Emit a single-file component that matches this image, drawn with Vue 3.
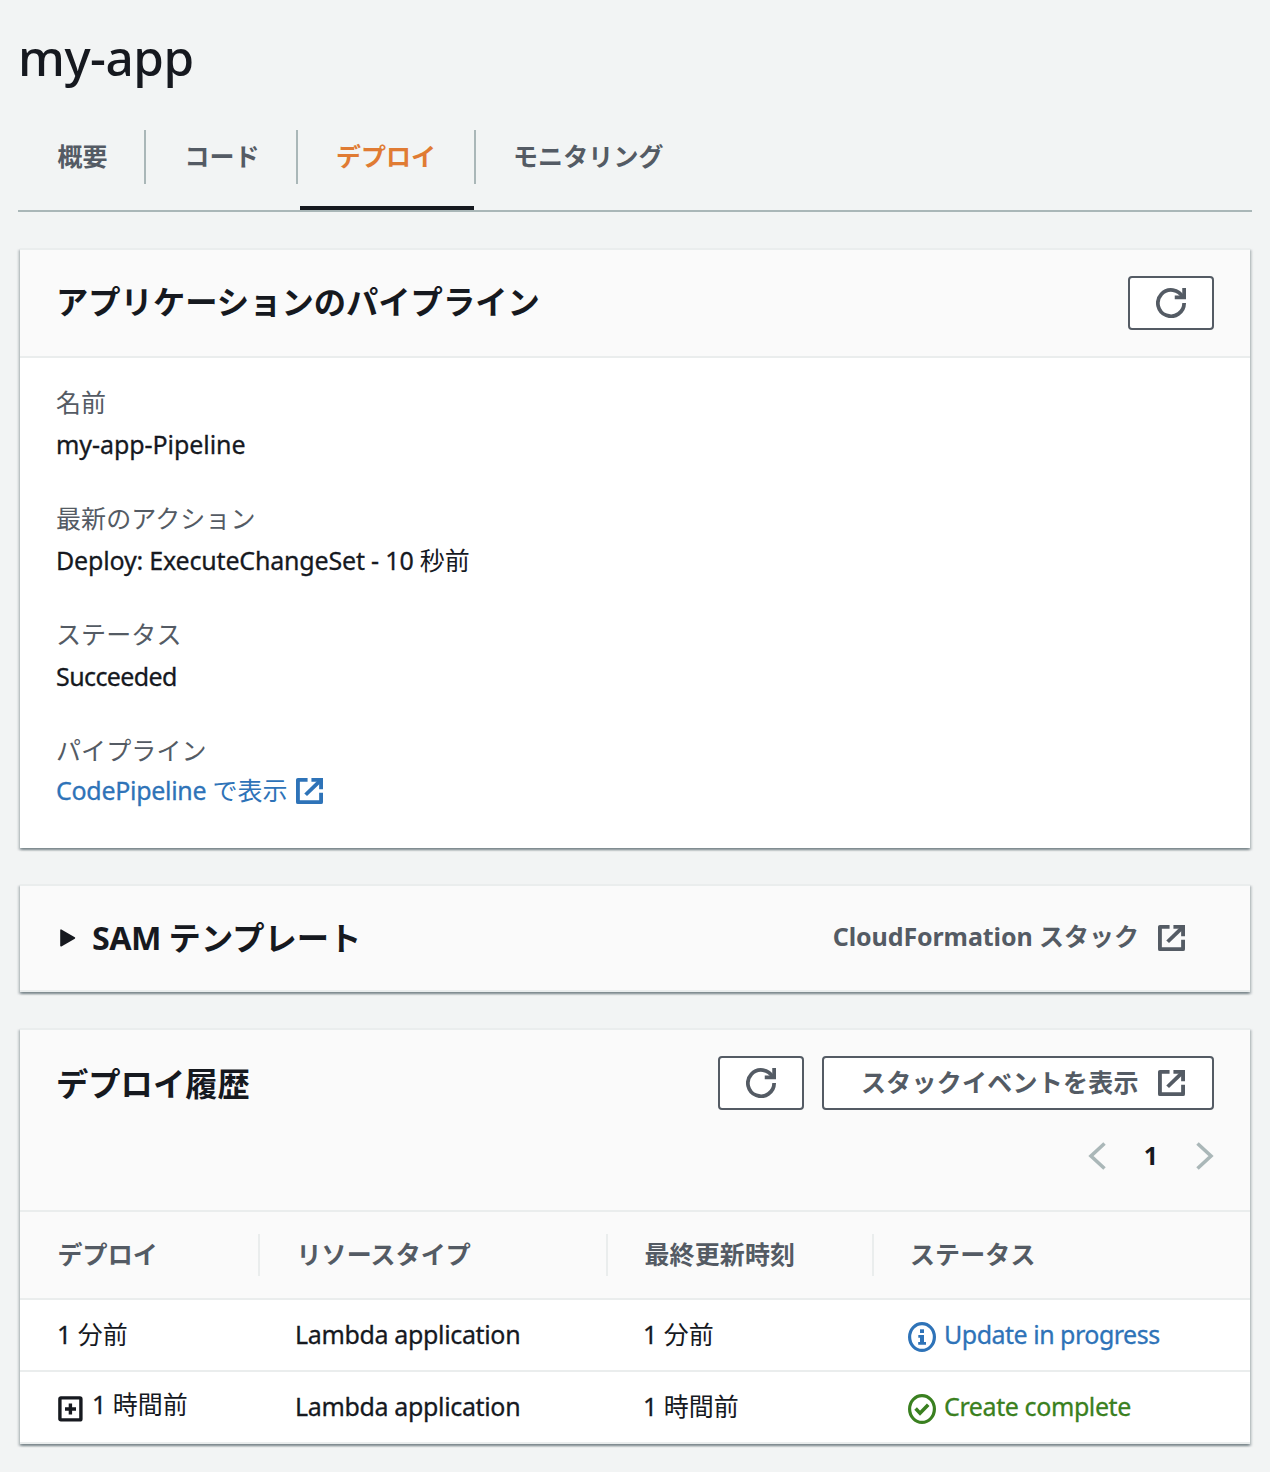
<script setup>
import { h } from 'vue'

const tabs = [
  { label: '概要', width: 128, pad: 39.5 },
  { label: 'コード', width: 152, pad: 38.5 },
  { label: 'デプロイ', width: 178, pad: 38, active: true },
  { label: 'モニタリング', width: 230, pad: 37 },
]

const details = [
  { label: '名前', latin: 'my-app-Pipeline', spacing: -0.07 },
  { label: '最新のアクション', latin: 'Deploy: ExecuteChangeSet - 10 ', rest: '秒前', spacing: -0.18 },
  { label: 'ステータス', latin: 'Succeeded', spacing: -0.6 },
]

const columns = ['デプロイ', 'リソースタイプ', '最終更新時刻', 'ステータス']

const rows = [
  { unit: '分前', type: 'Lambda application', status: 'Update in progress', kind: 'info', spacing: -0.5 },
  { unit: '時間前', type: 'Lambda application', status: 'Create complete', kind: 'success', spacing: -0.4, expandable: true },
]

const stroke = { fill: 'none', stroke: 'currentColor', 'stroke-width': 2 }

const RefreshIcon = () =>
  h('svg', { width: 30, height: 30, viewBox: '0 0 16 16', ...stroke }, [
    h('path', { d: 'M10 5h5V0' }),
    h('path', { d: 'M15 8a7 7 0 1 1-.7-3' }),
  ])

const ExternalIcon = () =>
  h('svg', { width: 27, height: 26, viewBox: '1 1 14 14', preserveAspectRatio: 'none', ...stroke }, [
    h('path', { d: 'M9 2h5v5' }),
    h('path', { d: 'M6 10 14 2' }),
    h('path', { d: 'M14 9v5H2V2h5', 'stroke-linejoin': 'round' }),
  ])
</script>

<template>
  <main class="page">
    <h1 class="title">my-app</h1>

    <nav class="tabs">
      <a
        v-for="tab in tabs"
        :key="tab.label"
        class="tab"
        :class="{ active: tab.active }"
        :style="{ width: tab.width + 'px' }"
      ><span class="tab-label" :style="{ paddingLeft: tab.pad + 'px' }">{{ tab.label }}</span></a>
    </nav>

    <section class="card pipeline">
      <header class="card-header">
        <h2>アプリケーションのパイプライン</h2>
        <button class="btn icon-btn"><RefreshIcon /></button>
      </header>
      <dl class="details">
        <div v-for="d in details" :key="d.label" class="detail">
          <dt>{{ d.label }}</dt>
          <dd><span class="latin" :style="{ letterSpacing: d.spacing + 'px' }">{{ d.latin }}</span>{{ d.rest }}</dd>
        </div>
        <div class="detail">
          <dt>パイプライン</dt>
          <dd class="link-row"><a class="link"><span class="latin">CodePipeline </span>で表示</a><ExternalIcon class="link-icon" /></dd>
        </div>
      </dl>
    </section>

    <section class="card template">
      <header class="card-header">
        <svg class="caret" width="16" height="18" viewBox="0 0 16 18">
          <path d="M1 1.2v15.6L14.4 9z" fill="currentColor" stroke="currentColor" stroke-width="1.6" stroke-linejoin="round" />
        </svg>
        <h2><span class="sam">SAM </span>テンプレート</h2>
        <a class="stack-link"><span class="stack-text"><span class="cf">CloudFormation </span>スタック</span><ExternalIcon /></a>
      </header>
    </section>

    <section class="card history">
      <header class="history-header">
        <div class="history-top">
          <h2>デプロイ履歴</h2>
          <button class="btn icon-btn"><RefreshIcon /></button>
          <button class="btn events-btn"><span class="events-text">スタックイベントを表示</span><ExternalIcon /></button>
        </div>
        <div class="pager">
          <svg width="18" height="28" viewBox="0 0 18 28"><path d="M16.500 1.500 3 14l13.500 12.500" /></svg>
          <span class="page-number">1</span>
          <svg width="18" height="28" viewBox="0 0 18 28"><path d="M1.500 1.500 15 14 1.500 26.500" /></svg>
        </div>
      </header>

      <div class="grid head">
        <div v-for="c in columns" :key="c" class="th">{{ c }}</div>
      </div>
      <div v-for="r in rows" :key="r.status" class="grid row">
        <div class="td first" :class="{ expandable: r.expandable }">
          <svg v-if="r.expandable" class="plus" width="25" height="26" viewBox="0 0 25 26">
            <rect x="1.900" y="1.900" width="21" height="22" rx="1" fill="none" stroke="currentColor" stroke-width="3.400" />
            <path d="M12.400 7.500v11M7 13h11" stroke="currentColor" stroke-width="3.400" />
          </svg>
          <span class="cell-text"><span class="latin">1 </span>{{ r.unit }}</span>
        </div>
        <div class="td"><span class="cell-text latin type">{{ r.type }}</span></div>
        <div class="td"><span class="cell-text"><span class="latin">1 </span>{{ r.unit }}</span></div>
        <div class="td" :class="r.kind">
          <svg class="status-icon" width="28" height="30" viewBox="0 0 28 30" fill="none">
            <ellipse cx="14" cy="15" rx="12.400" ry="13.400" stroke="currentColor" stroke-width="3.200" />
            <g v-if="r.kind === 'info'" fill="currentColor">
              <path d="M12 7.300h4v3.700h-4z" />
              <path d="M10.300 13h5.700v7h2v2.800h-7.800V20H12v-4.300h-1.700z" />
            </g>
            <path v-else d="m7.600 14.600 4.400 4.600 8.200-8.400" stroke="currentColor" stroke-width="3.600" />
          </svg>
          <span class="cell-text latin" :style="{ letterSpacing: r.spacing + 'px' }">{{ r.status }}</span>
        </div>
      </div>
    </section>
  </main>
</template>

<style>
body {
  margin: 0;
  background: #f2f4f4;
}
</style>

<style scoped>
.page {
  box-sizing: border-box;
  width: 1270px;
  height: 1472px;
  padding: 28px 18px 0;
  background: #f2f4f4;
  color: #16191f;
  font-family: "Noto Sans", "Noto Sans CJK JP", sans-serif;
  font-size: 25px;
  line-height: 36px;
  overflow: hidden;
}
svg {
  display: block;
  flex: none;
}
h1, h2, dl, dd {
  margin: 0;
}
.latin {
  white-space: pre;
  -webkit-text-stroke: 0.3px currentColor;
}
.title {
  height: 102px;
  font-size: 49.500px;
  font-weight: 500;
  line-height: 58px;
  letter-spacing: -0.5px;
}
.tabs {
  display: flex;
  height: 80px;
  border-bottom: 2px solid #aab7b8;
  color: #545b64;
  font-weight: 700;
}
.tab {
  box-sizing: border-box;
  height: 80px;
  display: flex;
  flex-direction: column;
}
.tab-label {
  box-sizing: border-box;
  height: 54px;
  line-height: 53px;
  border-right: 2px solid #aab7b8;
  white-space: nowrap;
}
.tab:last-child .tab-label {
  border-right: none;
}
.tab:last-child {
  letter-spacing: 0.1px;
}
.tab.active {
  color: #e07b33;
}
.tab.active::after {
  content: "";
  height: 4px;
  margin: 22px 2px 0;
  background: #16191f;
}
.card {
  margin: 36px 2px 0;
  border-top: 2px solid #eaeded;
  background: #fff;
  box-shadow: 0 2px 2px rgba(0, 28, 36, 0.3), 2px 2px 2px rgba(0, 28, 36, 0.15),
    -2px 2px 2px rgba(0, 28, 36, 0.15);
}
.pipeline {
  height: 598px;
}
.template {
  height: 106px;
}
.history {
  height: 414px;
}
.card-header {
  box-sizing: border-box;
  display: flex;
  align-items: center;
  height: 108px;
  padding: 0 36px;
  background: #fafafa;
  border-bottom: 2px solid #eaeded;
}
.template .card-header {
  height: 106px;
}
h2 {
  font-size: 32.300px;
  font-weight: 700;
  line-height: 44px;
  white-space: nowrap;
}
.pipeline h2 {
  margin-bottom: 4px;
}
.template h2 {
  margin-bottom: 3px;
}
.sam {
  letter-spacing: -0.6px;
}
.cf {
  letter-spacing: -0.1px;
}
.btn {
  box-sizing: border-box;
  display: flex;
  align-items: center;
  justify-content: center;
  height: 54px;
  padding: 0;
  border: 2px solid #545b64;
  border-radius: 4px;
  background: #fff;
  color: #545b64;
  font: inherit;
  font-weight: 700;
}
.icon-btn {
  width: 86px;
  margin-left: auto;
}
.details {
  padding: 26px 36px 0;
}
.detail {
  height: 116px;
}
dt {
  height: 42px;
  color: #545b64;
  letter-spacing: 0.1px;
}
.link-row {
  display: flex;
  align-items: center;
  margin-top: -2px;
}
.link {
  color: #2e73b8;
}
.link .latin {
  letter-spacing: -0.3px;
}
.link-icon {
  margin: 2px 0 0 8px;
  color: #2e73b8;
}
.caret {
  margin: 0 16px 0 4px;
}
.stack-link {
  display: flex;
  align-items: center;
  margin-left: auto;
  margin-right: 29px;
  color: #545b64;
  font-weight: 700;
}
.stack-text,
.events-text {
  margin-right: 19px;
  margin-bottom: 4px;
  white-space: nowrap;
}
.events-text {
  margin-bottom: 2px;
  letter-spacing: 0.25px;
}
.history-header {
  box-sizing: border-box;
  height: 182px;
  padding: 26px 36px 0;
  background: #fafafa;
  border-bottom: 2px solid #eaeded;
}
.history-top {
  display: flex;
  align-items: center;
}
.events-btn {
  width: 392px;
  margin-left: 18px;
  padding-left: 10px;
}
.pager {
  display: flex;
  align-items: center;
  justify-content: flex-end;
  height: 36px;
  margin-top: 28px;
}
.pager path {
  fill: none;
  stroke: #aab7b8;
  stroke-width: 3.600px;
}
.page-number {
  width: 90px;
  margin-bottom: 2px;
  text-align: center;
  font-weight: 700;
}
.grid {
  box-sizing: border-box;
  display: grid;
  grid-template-columns: 240px 348px 266px 1fr;
}
.head {
  height: 88px;
  padding-top: 22px;
  background: #fafafa;
  border-bottom: 2px solid #eaeded;
  color: #545b64;
  font-weight: 700;
}
.th {
  box-sizing: border-box;
  height: 42px;
  padding-left: 36.500px;
  line-height: 40px;
  border-right: 2px solid #eaeded;
  letter-spacing: 0.1px;
}
.th:first-child {
  padding-left: 37.500px;
}
.th:last-child {
  padding-left: 36px;
  border-right: none;
}
.row {
  height: 72px;
  border-bottom: 2px solid #eaeded;
}
.td {
  display: flex;
  align-items: center;
  padding-left: 35px;
}
.td.first {
  padding-left: 37px;
}
.cell-text {
  margin-bottom: 2px;
}
.td.expandable .cell-text {
  margin-top: -4px;
}
.type {
  letter-spacing: -0.35px;
}
.plus {
  margin: 4px 9.500px 0 0.500px;
}
.status-icon {
  margin: 3px 8px 0 -1px;
}
.info {
  color: #2e73b8;
}
.success {
  color: #3a8020;
}
</style>
